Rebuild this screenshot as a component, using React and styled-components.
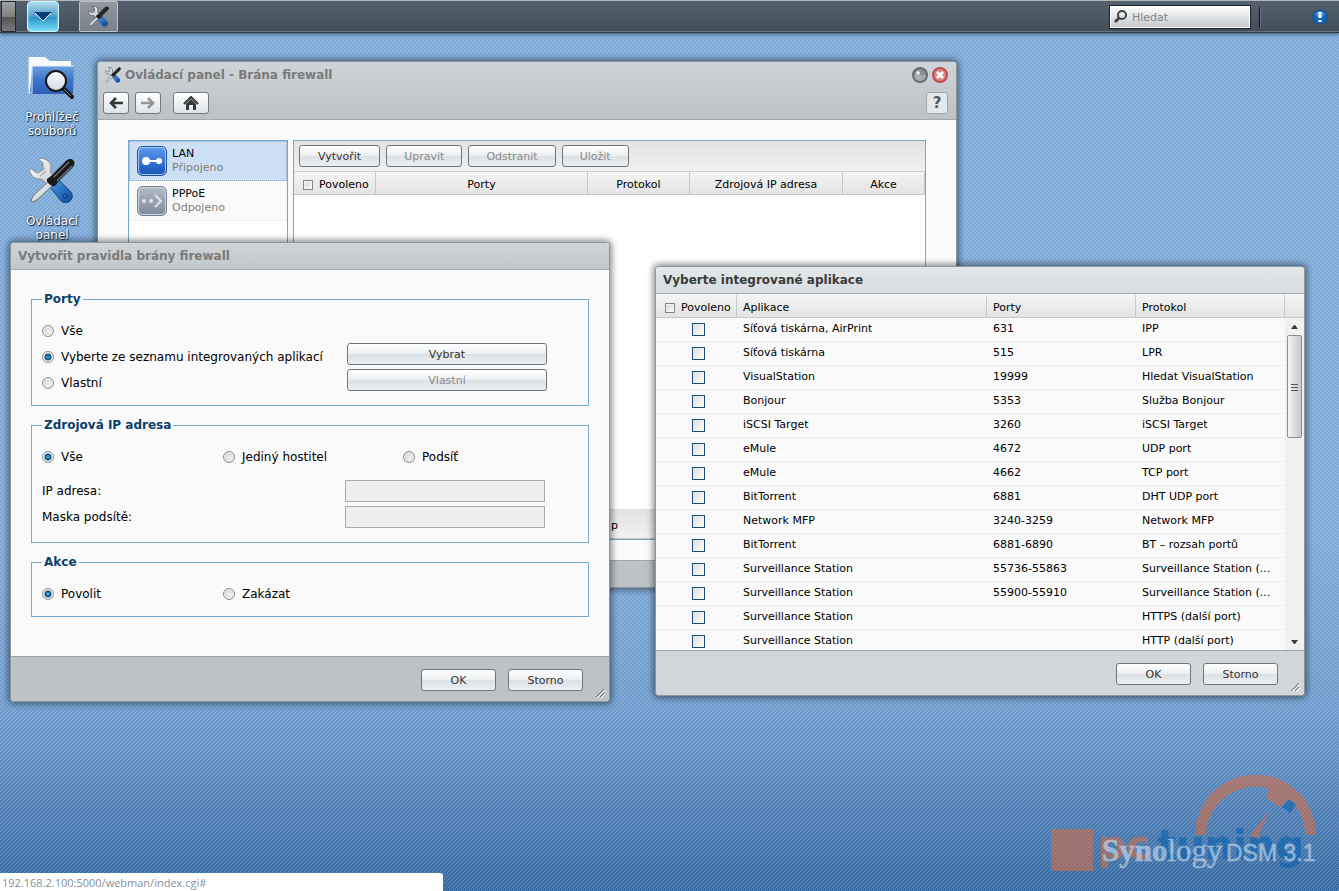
import React, { useState } from "react";
import styled, { createGlobalStyle } from "styled-components";

const apps = [
  ["Síťová tiskárna, AirPrint", "631", "IPP"],
  ["Síťová tiskárna", "515", "LPR"],
  ["VisualStation", "19999", "Hledat VisualStation"],
  ["Bonjour", "5353", "Služba Bonjour"],
  ["iSCSI Target", "3260", "iSCSI Target"],
  ["eMule", "4672", "UDP port"],
  ["eMule", "4662", "TCP port"],
  ["BitTorrent", "6881", "DHT UDP port"],
  ["Network MFP", "3240-3259", "Network MFP"],
  ["BitTorrent", "6881-6890", "BT – rozsah portů"],
  ["Surveillance Station", "55736-55863", "Surveillance Station (..."],
  ["Surveillance Station", "55900-55910", "Surveillance Station (..."],
  ["Surveillance Station", "", "HTTPS (další port)"],
  ["Surveillance Station", "", "HTTP (další port)"]
];

// 4x4 tile of the diagonal wallpaper hatch
const hatch =
  "url(\"data:image/svg+xml,%3Csvg xmlns='http://www.w3.org/2000/svg' width='4' height='4' shape-rendering='crispEdges'%3E%3Cpath fill='white' fill-opacity='0.2' d='M0 3h1v1H0zM1 2h1v1H1zM2 1h1v1H2zM3 0h1v1H3z'/%3E%3C/svg%3E\")";

function ToolsIcon({ size }) {
  return (
    <svg width={size} height={size} viewBox="0 0 46 46" aria-hidden="true">
      <defs>
        <linearGradient id="steel" x1="0" y1="0" x2="1" y2="1">
          <stop offset="0" stopColor="#ffffff" />
          <stop offset="1" stopColor="#b9bdc1" />
        </linearGradient>
        <linearGradient id="grip" x1="0" y1="0" x2="1" y2="1">
          <stop offset="0" stopColor="#4d97e6" />
          <stop offset="1" stopColor="#0c4a9c" />
        </linearGradient>
      </defs>
      <path
        d="M9 1c6-2 12 2 13 7 0 3-1 5 0 7l9 9-8 8-9-10c-2-2-5 0-8-2-4-2-6-6-5-10l7 5 6-3 0-7z"
        fill="url(#steel)"
        stroke={size < 30 ? "#5c6267" : "#868d93"}
        strokeWidth={size < 30 ? 2 : 1}
      />
      <path d="M9 15l7-5M11 18l6-5" stroke="#a3a8ac" strokeWidth="1.2" />
      <path
        d="M30 22l11 11c3 3 3 6 1 9l-2 2c-3 1-6 1-8-1L21 29z"
        fill="url(#grip)"
        stroke="#0b3c80"
        strokeWidth="0.8"
      />
      <circle cx="36" cy="38" r="2" fill="#2b72c4" stroke="#073067" />
      <path
        d="M20 23l4 4L9 41l-5 3-2-2 3-5z"
        fill="url(#steel)"
        stroke="#6d7378"
        strokeWidth={size < 30 ? 2 : 1}
      />
      <path
        d="M18 21l4-3L37 3c3-3 6-2 7-1 2 2 2 4 0 7L29 24l-3 4c-3 1-9-3-8-7z"
        fill="#191919"
      />
      <path d="M25 19L40 4M28 23L43 8" stroke="#777777" strokeWidth="1.3" />
    </svg>
  );
}

function FolderIcon() {
  return (
    <svg width="48" height="46" viewBox="0 -2 48 46" aria-hidden="true">
      <defs>
        <linearGradient id="folder" x1="0" y1="0" x2="0" y2="1">
          <stop offset="0" stopColor="#6ea0de" />
          <stop offset="0.5" stopColor="#3b74c8" />
          <stop offset="1" stopColor="#2c5fb5" />
        </linearGradient>
        <linearGradient id="lens" x1="0" y1="0" x2="0" y2="1">
          <stop offset="0" stopColor="#ffffff" />
          <stop offset="1" stopColor="#cfd9e4" />
        </linearGradient>
      </defs>
      <path d="M1 1h16l5 4h21v10H6v22H1z" fill="#f8fafc" />
      <path d="M4 10h42l-1 28H2z" fill="url(#folder)" />
      <path d="M1 1v36h3V10h42" fill="none" stroke="#e8eff8" />
      <path d="M35 32l9 9" stroke="#111111" strokeWidth="4" strokeLinecap="round" />
      <path d="M36 33l7 7" stroke="#888888" strokeWidth="1" />
      <circle cx="28" cy="25" r="10" fill="url(#lens)" stroke="#161616" strokeWidth="2" />
    </svg>
  );
}

function Watermark() {
  return (
    <svg width="270" height="100" viewBox="0 0 270 100" aria-hidden="true">
      <g opacity="0.62">
        <rect x="2" y="54" width="42" height="42" fill="#d06e4c" />
        <path
          d="M146 60a60 60 0 0 1 121 0h-11a50 50 0 0 0-16-36l-9 8-14-9 2-10a50 50 0 0 0-62 47z"
          fill="#d06e4c"
        />
        <path d="M203 58l18-22-12 26z" fill="#d06e4c" />
        <circle cx="206" cy="60" r="4" fill="#d06e4c" />
        <path d="M240 24l7 6-6 8-8-6z" fill="#0b61ae" />
      </g>
      <BrandText x="48" y="84" fill="#d06e4c">
        pc
      </BrandText>
      <BrandText x="108" y="84" fill="#0b61ae">
        tuning
      </BrandText>
      <SystemText x="53" y="86" fontFamily="Liberation Serif" fontSize="31">
        <tspan fontWeight="bold">Syno</tspan>logy
      </SystemText>
      <SystemText x="177" y="86" fontFamily="Liberation Sans" fontSize="23">
        DSM 3.1
      </SystemText>
    </svg>
  );
}

function ResizeGrip() {
  return (
    <Grip width="10" height="10" viewBox="0 0 10 10" aria-hidden="true">
      <path d="M0 9L8 1M4 9l4-4" stroke="#666666" />
      <path d="M1 10l8-8M5 10l4-4" stroke="#ffffff" />
    </Grip>
  );
}

function RadioOption({ name, value, current, onChange, children }) {
  return (
    <OptionLabel>
      <Radio
        type="radio"
        name={name}
        checked={current === value}
        onChange={() => onChange(value)}
      />
      {children}
    </OptionLabel>
  );
}

function TaskBar() {
  return (
    <Bar>
      <EdgeButton aria-label="Plocha" />
      <MenuButton aria-label="Hlavní nabídka">
        <svg width="18" height="10" viewBox="0 0 18 10">
          <path d="M0 0h18L9 9z" fill="#0a3c78" />
          <path d="M1 1l8 8 8-8" fill="none" stroke="#e8faff" />
        </svg>
      </MenuButton>
      <TaskButton aria-label="Ovládací panel">
        <ToolsIcon size={21} />
      </TaskButton>
      <SearchBox>
        <svg width="14" height="14" viewBox="0 0 14 14" aria-hidden="true">
          <circle cx="8" cy="5" r="4" fill="none" stroke="#3e4449" strokeWidth="2" />
          <path d="M5 8l-4 4" stroke="#3e4449" strokeWidth="3" />
        </svg>
        <SearchInput type="text" placeholder="Hledat" aria-label="Hledat" />
      </SearchBox>
      <BarDivider />
      <NoticeButton aria-label="Oznámení">
        <svg width="16" height="16" viewBox="0 0 16 16">
          <circle cx="8" cy="8" r="7" fill="#1366be" stroke="#0a4b94" />
          <ellipse cx="8" cy="5" rx="5" ry="3" fill="#5ba1e6" opacity="0.6" />
          <path d="M8 3v6M8 11v2" stroke="#ffffff" strokeWidth="3" />
        </svg>
      </NoticeButton>
    </Bar>
  );
}

function ControlPanel() {
  return (
    <MainWindow>
      <MainHeader>
        <MainTitleRow>
          <ToolsIcon size={16} />
          <WindowTitle>Ovládací panel - Brána firewall</WindowTitle>
          <CircleButton aria-label="Minimalizovat">
            <svg width="16" height="16" viewBox="0 0 16 16">
              <circle cx="8" cy="8" r="7" fill="#8b8f91" stroke="#686c6e" strokeWidth="2" />
              <path d="M2 8a6 6 0 0 0 12 0z" fill="#a9adaf" />
              <circle cx="6" cy="6" r="2" fill="#e6e8e9" />
            </svg>
          </CircleButton>
          <CircleButton aria-label="Zavřít">
            <svg width="16" height="16" viewBox="0 0 16 16">
              <circle cx="8" cy="8" r="7" fill="#dc8684" stroke="#bd4d4b" strokeWidth="2" />
              <path d="M5 5l6 6M11 5l-6 6" stroke="#ffffff" strokeWidth="2.6" />
            </svg>
          </CircleButton>
        </MainTitleRow>
        <NavRow>
          <NavButton aria-label="Zpět">
            <svg width="14" height="12" viewBox="0 0 14 12">
              <path d="M7 1L2 6l5 5M2 6h12" fill="none" stroke="#33373a" strokeWidth="2.6" />
            </svg>
          </NavButton>
          <NavButton aria-label="Vpřed">
            <svg width="14" height="12" viewBox="0 0 14 12">
              <path d="M7 1l5 5-5 5M12 6H0" fill="none" stroke="#94989b" strokeWidth="2.6" />
            </svg>
          </NavButton>
          <HomeButton aria-label="Domů">
            <svg width="16" height="14" viewBox="0 0 16 14">
              <path d="M1 8l7-7 7 7" fill="none" stroke="#33373a" strokeWidth="2" />
              <path d="M3 8l5-5 5 5v6h-3V9H6v5H3z" fill="#33373a" />
            </svg>
          </HomeButton>
          <HelpButton aria-label="Nápověda">?</HelpButton>
        </NavRow>
      </MainHeader>
      <MainBody>
        <InterfaceList>
          <InterfaceItem $active>
            <svg width="30" height="30" viewBox="0 0 30 30" aria-hidden="true">
              <defs>
                <linearGradient id="lan" x1="0" y1="0" x2="0" y2="1">
                  <stop offset="0" stopColor="#5f9cf0" />
                  <stop offset="1" stopColor="#1453b4" />
                </linearGradient>
              </defs>
              <rect x="0.5" y="0.5" width="29" height="29" rx="5" fill="url(#lan)" stroke="#184f9f" />
              <rect x="1.5" y="1.5" width="27" height="27" rx="4" fill="none" stroke="#a8cbf8" />
              <path d="M9 15h13" stroke="#ffffff" strokeWidth="2" />
              <circle cx="9" cy="15" r="4" fill="#ffffff" />
              <circle cx="22" cy="15" r="3" fill="#ffffff" />
            </svg>
            <div>
              <InterfaceName>LAN</InterfaceName>
              <InterfaceState>Připojeno</InterfaceState>
            </div>
          </InterfaceItem>
          <InterfaceItem>
            <svg width="30" height="30" viewBox="0 0 30 30" aria-hidden="true">
              <defs>
                <linearGradient id="ppp" x1="0" y1="0" x2="0" y2="1">
                  <stop offset="0" stopColor="#b3bcc8" />
                  <stop offset="1" stopColor="#7c8a9c" />
                </linearGradient>
              </defs>
              <rect x="0.5" y="0.5" width="29" height="29" rx="5" fill="url(#ppp)" stroke="#74808e" />
              <rect x="1.5" y="1.5" width="27" height="27" rx="4" fill="none" stroke="#ccd3db" />
              <circle cx="7" cy="15" r="2" fill="#dde1e6" />
              <circle cx="14" cy="15" r="2" fill="#dde1e6" />
              <path d="M18 9l6 6-6 6" fill="none" stroke="#dde1e6" strokeWidth="2" />
            </svg>
            <div>
              <InterfaceName>PPPoE</InterfaceName>
              <InterfaceState>Odpojeno</InterfaceState>
            </div>
          </InterfaceItem>
        </InterfaceList>
        <RulesPane>
          <RulesToolbar>
            <Button $pad={18}>Vytvořit</Button>
            <Button $pad={17} disabled>
              Upravit
            </Button>
            <Button $pad={17} disabled>
              Odstranit
            </Button>
            <Button $pad={17} disabled>
              Uložit
            </Button>
          </RulesToolbar>
          <RulesTable>
            <colgroup>
              <col width="82" />
              <col width="212" />
              <col width="102" />
              <col width="153" />
              <col width="82" />
            </colgroup>
            <thead>
              <tr>
                <HeadCell $check>
                  <CheckLabel>
                    <HeadCheckbox type="checkbox" />
                    Povoleno
                  </CheckLabel>
                </HeadCell>
                <HeadCell $center>Porty</HeadCell>
                <HeadCell $center>Protokol</HeadCell>
                <HeadCell $center>Zdrojová IP adresa</HeadCell>
                <HeadCell $center>Akce</HeadCell>
              </tr>
            </thead>
          </RulesTable>
          <RulesFooter>p</RulesFooter>
        </RulesPane>
      </MainBody>
      <MainFooter />
    </MainWindow>
  );
}

function RuleDialog() {
  const [ports, setPorts] = useState("builtin");
  const [source, setSource] = useState("all");
  const [action, setAction] = useState("allow");

  return (
    <RuleWindow>
      <DialogHeader>
        <WindowTitle>Vytvořit pravidla brány firewall</WindowTitle>
      </DialogHeader>
      <RuleBody>
        <Group>
          <Legend>Porty</Legend>
          <PortsGrid>
            <div>
              <RadioOption name="ports" value="all" current={ports} onChange={setPorts}>
                Vše
              </RadioOption>
              <RadioOption name="ports" value="builtin" current={ports} onChange={setPorts}>
                Vyberte ze seznamu integrovaných aplikací
              </RadioOption>
              <RadioOption name="ports" value="custom" current={ports} onChange={setPorts}>
                Vlastní
              </RadioOption>
            </div>
            <PortButtons>
              <Button disabled={ports !== "builtin"}>Vybrat</Button>
              <Button disabled={ports !== "custom"}>Vlastní</Button>
            </PortButtons>
          </PortsGrid>
        </Group>
        <Group>
          <Legend>Zdrojová IP adresa</Legend>
          <OptionRow>
            <RadioOption name="source" value="all" current={source} onChange={setSource}>
              Vše
            </RadioOption>
            <RadioOption name="source" value="host" current={source} onChange={setSource}>
              Jediný hostitel
            </RadioOption>
            <RadioOption name="source" value="subnet" current={source} onChange={setSource}>
              Podsíť
            </RadioOption>
          </OptionRow>
          <FieldRows>
            <FieldRow>
              <label htmlFor="ip">IP adresa:</label>
              <TextField id="ip" type="text" disabled={source === "all"} />
            </FieldRow>
            <FieldRow>
              <label htmlFor="mask">Maska podsítě:</label>
              <TextField id="mask" type="text" disabled={source !== "subnet"} />
            </FieldRow>
          </FieldRows>
        </Group>
        <Group>
          <Legend>Akce</Legend>
          <OptionRow>
            <RadioOption name="action" value="allow" current={action} onChange={setAction}>
              Povolit
            </RadioOption>
            <RadioOption name="action" value="deny" current={action} onChange={setAction}>
              Zakázat
            </RadioOption>
          </OptionRow>
        </Group>
      </RuleBody>
      <DialogFooter>
        <Button $wide>OK</Button>
        <Button $wide>Storno</Button>
        <ResizeGrip />
      </DialogFooter>
    </RuleWindow>
  );
}

function AppsDialog() {
  return (
    <AppsWindow>
      <DialogHeader $active>
        <WindowTitle $active>Vyberte integrované aplikace</WindowTitle>
      </DialogHeader>
      <AppsBody>
        <AppsTable>
          <colgroup>
            <col width="81" />
            <col width="250" />
            <col width="149" />
            <col width="149" />
          </colgroup>
          <thead>
            <tr>
              <HeadCell $check>
                <CheckLabel>
                  <HeadCheckbox type="checkbox" />
                  Povoleno
                </CheckLabel>
              </HeadCell>
              <HeadCell>Aplikace</HeadCell>
              <HeadCell>Porty</HeadCell>
              <HeadCell>Protokol</HeadCell>
            </tr>
          </thead>
          <tbody>
            {apps.map(([name, port, protocol], index) => (
              <tr key={index}>
                <Cell $check>
                  <Checkbox type="checkbox" aria-label={name} />
                </Cell>
                <Cell>{name}</Cell>
                <Cell>{port}</Cell>
                <Cell>{protocol}</Cell>
              </tr>
            ))}
          </tbody>
        </AppsTable>
        <ScrollColumn>
          <ScrollHead />
          <ScrollTrack>
            <ScrollArrow>
              <svg width="7" height="4" viewBox="0 0 7 4">
                <path d="M0 4l3-4h1l3 4z" fill="#3c3c3c" />
              </svg>
            </ScrollArrow>
            <ScrollThumb>
              <svg width="7" height="8" viewBox="0 0 7 8" shapeRendering="crispEdges">
                <path d="M0 1h7M0 4h7M0 7h7" stroke="#555555" />
              </svg>
            </ScrollThumb>
            <ScrollArrow $last>
              <svg width="7" height="4" viewBox="0 0 7 4">
                <path d="M0 0l3 4h1l3-4z" fill="#3c3c3c" />
              </svg>
            </ScrollArrow>
          </ScrollTrack>
        </ScrollColumn>
      </AppsBody>
      <DialogFooter $active>
        <Button $wide>OK</Button>
        <Button $wide>Storno</Button>
        <ResizeGrip />
      </DialogFooter>
    </AppsWindow>
  );
}

export default function App() {
  return (
    <>
      <GlobalStyle />
      <Desktop>
        <TaskBar />
        <Shortcuts>
          <Shortcut href="#">
            <FolderIcon />
            Prohlížeč souborů
          </Shortcut>
          <Shortcut href="#">
            <ToolsIcon size={46} />
            Ovládací panel
          </Shortcut>
        </Shortcuts>
        <WatermarkSpot>
          <Watermark />
        </WatermarkSpot>
        <ControlPanel />
        <RuleDialog />
        <AppsDialog />
        <StatusBar>192.168.2.100:5000/webman/index.cgi#</StatusBar>
      </Desktop>
    </>
  );
}

const GlobalStyle = createGlobalStyle`
  * {
    box-sizing: border-box;
  }
  body {
    margin: 0;
    font-family: Verdana, "DejaVu Sans", sans-serif;
    font-size: 11px;
    line-height: 14px;
    color: #000000;
  }
  button, input {
    margin: 0;
    padding: 0;
    font: inherit;
  }
  svg {
    display: block;
    flex-shrink: 0;
  }
`;

const Desktop = styled.main`
  position: relative;
  min-height: 100vh;
  overflow: hidden;
  background: ${hatch},
    linear-gradient(#80abd9 0%, #80abd9 60%, #709dcd 80%, #366aa3 100%);
`;

const Bar = styled.header`
  display: flex;
  align-items: center;
  height: 33px;
  padding: 0 11px 0 1px;
  border-top: 1px solid #b4b7ba;
  border-bottom: 1px solid #2f3943;
  background: linear-gradient(#54616e, #424d5a);
  box-shadow: inset 0 -1px 0 #66737f, 0 1px 4px rgba(0, 20, 50, 0.6);
`;

const EdgeButton = styled.button`
  width: 15px;
  height: 31px;
  border: 1px solid #262a2e;
  background: linear-gradient(#a2a2a2 0%, #808080 50%, #555555 51%, #777777 100%);
`;

const MenuButton = styled.button`
  display: flex;
  align-items: center;
  justify-content: center;
  width: 32px;
  height: 31px;
  margin-left: 11px;
  border: 1px solid #c9f4ff;
  border-radius: 4px;
  background: linear-gradient(#b7d9ec 0%, #4e9cc9 50%, #2d93c6 52%, #74dcf6 100%);
  box-shadow: inset 0 0 3px #8eeaff;
`;

const TaskButton = styled.button`
  display: flex;
  align-items: center;
  justify-content: center;
  width: 39px;
  height: 31px;
  margin-left: 20px;
  border: 1px solid #bcc2c7;
  border-radius: 2px;
  background: linear-gradient(#9198a0, #78818b);
`;

const SearchBox = styled.div`
  display: flex;
  align-items: center;
  gap: 4px;
  width: 142px;
  height: 24px;
  margin-left: auto;
  padding-left: 4px;
  border: 1px solid #1b2129;
  background: linear-gradient(#ffffff, #c3c8cc);
  box-shadow: inset 0 0 0 1px #ffffff;
`;

const SearchInput = styled.input`
  flex: 1;
  min-width: 0;
  padding-top: 2px;
  border: 0;
  outline: 0;
  background: transparent;
  &::placeholder {
    color: #858585;
    opacity: 1;
  }
`;

const BarDivider = styled.span`
  width: 2px;
  height: 20px;
  margin: 0 51px 0 8px;
  border-left: 1px solid #101418;
  border-right: 1px solid #6b7680;
`;

const NoticeButton = styled.button`
  width: 16px;
  height: 16px;
  border: 0;
  background: none;
`;

const Shortcuts = styled.nav`
  display: flex;
  flex-direction: column;
  gap: 20px;
  width: 64px;
  margin: 21px 0 0 20px;
`;

const Shortcut = styled.a`
  display: flex;
  flex-direction: column;
  align-items: center;
  gap: 10px;
  font-size: 12px;
  line-height: 14px;
  text-align: center;
  text-decoration: none;
  color: #ffffff;
  text-shadow: 1px 1px 1px #10263f, 0 0 2px #23466e;
`;

const WatermarkSpot = styled.div`
  position: absolute;
  right: 20px;
  bottom: 16px;
`;

const BrandText = styled.text`
  font-family: "DejaVu Sans", sans-serif;
  font-size: 40px;
  font-weight: 700;
  opacity: 0.6;
`;

const SystemText = styled.text`
  fill: #cfe0f2;
  stroke: #cfe0f2;
  stroke-width: 0.5px;
  opacity: 0.6;
`;

const Window = styled.section`
  position: absolute;
  display: flex;
  flex-direction: column;
  border: 1px solid #8f9599;
  border-radius: 4px;
  background: #fafafa;
  box-shadow: 0 0 6px 2px rgba(0, 0, 0, 0.45);
`;

const MainWindow = styled(Window)`
  left: 97px;
  top: 61px;
  width: 860px;
  height: 527px;
`;

const RuleWindow = styled(Window)`
  left: 10px;
  top: 242px;
  width: 600px;
`;

const AppsWindow = styled(Window)`
  left: 655px;
  top: 266px;
  width: 650px;
`;

const MainHeader = styled.header`
  height: 58px;
  padding: 4px 8px 0 5px;
  border-bottom: 1px solid #a3a7aa;
  border-radius: 3px 3px 0 0;
  background: linear-gradient(#cfd4d8, #bcc1c5);
`;

const MainTitleRow = styled.div`
  display: flex;
  align-items: center;
  gap: 4px;
  height: 18px;
  padding-left: 2px;
`;

const WindowTitle = styled.h1`
  flex: 1;
  margin: 0;
  font-size: 12px;
  line-height: 14px;
  font-weight: 700;
  color: ${props => (props.$active ? "#3a3a3a" : "#7a7a7a")};
`;

const CircleButton = styled.button`
  width: 16px;
  height: 16px;
  border: 0;
  background: none;
`;

const NavRow = styled.div`
  display: flex;
  align-items: center;
  gap: 6px;
  margin-top: 8px;
`;

const NavButton = styled.button`
  display: flex;
  align-items: center;
  justify-content: center;
  width: 26px;
  height: 22px;
  border: 1px solid #75797c;
  border-radius: 3px;
  background: linear-gradient(#ffffff, #dfe3e6);
`;

const HomeButton = styled(NavButton)`
  width: 36px;
  margin-left: 6px;
`;

const HelpButton = styled(NavButton)`
  width: 22px;
  margin-left: auto;
  border-color: #a2a6a9;
  font-size: 15px;
  font-weight: 700;
  color: #55585a;
  background: #e3e7ea;
`;

const MainBody = styled.div`
  flex: 1;
  display: flex;
  gap: 5px;
  padding: 20px 30px;
`;

const InterfaceList = styled.div`
  width: 160px;
  border: 1px solid #78a8cc;
  background: #ffffff;
`;

const InterfaceItem = styled.div`
  display: flex;
  align-items: center;
  gap: 5px;
  height: 40px;
  padding: 0 7px;
  border: 1px solid #ededed;
  border-top-color: transparent;
  background: #fafafa;
  ${props =>
    props.$active &&
    `
      border: 1px dotted #8ba5bf;
      background: #cddff4;
    `}
`;

const InterfaceName = styled.div`
  color: #000000;
`;

const InterfaceState = styled.div`
  color: #808080;
`;

const RulesPane = styled.div`
  flex: 1;
  display: flex;
  flex-direction: column;
  border: 1px solid #78a8cc;
  background: #ffffff;
`;

const RulesToolbar = styled.div`
  display: flex;
  gap: 6px;
  height: 31px;
  padding: 4px 5px;
  border-bottom: 1px solid #cfcfcf;
  background: linear-gradient(#e2e2e2, #f1f1f1);
`;

const RulesTable = styled.table`
  width: 100%;
  table-layout: fixed;
  border-collapse: separate;
  border-spacing: 0;
`;

const RulesFooter = styled.div`
  height: 30px;
  margin-top: auto;
  padding: 10px 0 0 317px;
  border-bottom: 1px solid #c4c4c4;
  background: linear-gradient(#e2e2e2, #f1f1f1);
`;

const MainFooter = styled.footer`
  height: 27px;
  border-top: 1px solid #a3a7aa;
  border-radius: 0 0 3px 3px;
  background: #bdc2c6;
`;

const Button = styled.button`
  width: ${props => (props.$wide ? "75px" : "auto")};
  height: 22px;
  padding: 1px ${props => props.$pad || 0}px 0;
  border: 1px solid #70757a;
  border-radius: 3px;
  color: #333333;
  background: linear-gradient(#ffffff 0%, #eceff1 48%, #dce1e6 52%, #eaf0f3 100%);
  &:disabled {
    color: #8a8a8a;
  }
`;

const HeadCell = styled.th`
  height: 23px;
  padding: 3px 0 0 ${props => (props.$center ? "0" : props.$check ? "9px" : "6px")};
  border-right: 1px solid #c8c8c8;
  border-bottom: 1px solid #c8c8c8;
  font-weight: 400;
  text-align: ${props => (props.$center ? "center" : "left")};
  white-space: nowrap;
  background: linear-gradient(#f4f4f4, #e4e4e4);
`;

const CheckLabel = styled.label`
  display: flex;
  align-items: center;
  gap: 6px;
`;

const HeadCheckbox = styled.input`
  appearance: none;
  width: 10px;
  height: 10px;
  border: 1px solid #858585;
  background: linear-gradient(135deg, #cfd2d6, #ffffff);
  box-shadow: inset 0 0 0 1px #f4f4f4;
`;

const Checkbox = styled.input`
  appearance: none;
  display: block;
  width: 13px;
  height: 13px;
  margin: 0 auto;
  border: 1px solid #1c5180;
  background: linear-gradient(135deg, #dcdcd7, #ffffff);
  &:checked {
    background: #1c5180;
  }
`;

const DialogHeader = styled.header`
  height: 27px;
  padding: 6px 7px;
  border-bottom: 1px solid #a3a7aa;
  border-radius: 3px 3px 0 0;
  background: ${props =>
    props.$active
      ? "linear-gradient(#e2e7ea, #d8dde1)"
      : "linear-gradient(#cfd4d8, #c3c8cc)"};
`;

const RuleBody = styled.div`
  display: flex;
  flex-direction: column;
  gap: 12px;
  padding: 22px 20px 39px;
  font-size: 12px;
`;

const Group = styled.fieldset`
  min-width: 0;
  margin: 0;
  padding: 12px 10px 9px;
  border: 1px solid #78a8cc;
`;

const Legend = styled.legend`
  padding: 0 2px;
  font-size: 12px;
  line-height: 14px;
  font-weight: 700;
  color: #0a3f6b;
`;

const PortsGrid = styled.div`
  display: grid;
  grid-template-columns: 305px 200px;
`;

const PortButtons = styled.div`
  display: flex;
  flex-direction: column;
  gap: 4px;
  padding-top: 25px;
  font-size: 11px;
`;

const OptionRow = styled.div`
  display: grid;
  grid-template-columns: 181px 180px 1fr;
`;

const OptionLabel = styled.label`
  display: flex;
  align-items: center;
  gap: 7px;
  height: 26px;
  white-space: nowrap;
`;

const Radio = styled.input`
  appearance: none;
  width: 12px;
  height: 12px;
  border: 1px solid #8b8d8f;
  border-radius: 50%;
  background: radial-gradient(circle at 60% 60%, #f2f2f2, #c6c9cc);
  box-shadow: inset 0 0 0 1px #f4f4f4;
  &:checked {
    background: radial-gradient(circle, #4cb4e4 0px, #0d4d7c 3px, #dfe3e6 4px);
  }
`;

const FieldRows = styled.div`
  margin: 8px 0 3px;
`;

const FieldRow = styled.div`
  display: grid;
  grid-template-columns: 303px 200px;
  align-items: center;
  height: 26px;
`;

const TextField = styled.input`
  height: 22px;
  padding: 0 4px;
  border: 1px solid #a9a9a9;
  background: #ffffff;
  &:disabled {
    background: #eeeeee;
  }
`;

const DialogFooter = styled.footer`
  position: relative;
  display: flex;
  justify-content: flex-end;
  gap: 12px;
  height: 45px;
  padding: 12px 26px 0 0;
  border-top: 1px solid #9da1a4;
  border-radius: 0 0 3px 3px;
  background: ${props => (props.$active ? "#d1d6da" : "#bdc2c6")};
`;

const Grip = styled.svg`
  position: absolute;
  right: 3px;
  bottom: 3px;
`;

const AppsBody = styled.div`
  display: flex;
  height: 356px;
  border-top: 1px solid #f6f6f6;
  overflow: hidden;
`;

const AppsTable = styled.table`
  flex: 1;
  align-self: flex-start;
  min-width: 0;
  table-layout: fixed;
  border-collapse: separate;
  border-spacing: 0;
`;

const Cell = styled.td`
  height: 24px;
  padding: 0 0 1px ${props => (props.$check ? "4px" : "6px")};
  border-bottom: 1px solid #ededed;
  white-space: nowrap;
`;

const ScrollColumn = styled.div`
  display: flex;
  flex-direction: column;
  width: 19px;
`;

const ScrollHead = styled.div`
  height: 23px;
  border-bottom: 1px solid #c8c8c8;
  background: linear-gradient(#f4f4f4, #e4e4e4);
`;

const ScrollTrack = styled.div`
  flex: 1;
  display: flex;
  flex-direction: column;
  padding: 0 2px;
  background: #f0f0f0;
`;

const ScrollArrow = styled.div`
  display: flex;
  align-items: center;
  justify-content: center;
  height: 17px;
  margin-top: ${props => (props.$last ? "auto" : "0")};
`;

const ScrollThumb = styled.div`
  display: flex;
  align-items: center;
  justify-content: center;
  height: 103px;
  border: 1px solid #8f8f8f;
  border-radius: 2px;
  background: linear-gradient(90deg, #f5f5f5 0%, #e0e0e3 45%, #c6c6cb 100%);
`;

const StatusBar = styled.div`
  position: absolute;
  left: 0;
  bottom: 0;
  width: 443px;
  height: 18px;
  padding: 3px 2px 0;
  border-radius: 0 3px 0 0;
  font-family: "Open Sans", sans-serif;
  font-size: 11px;
  color: #84909c;
  background: #ffffff;
`;
